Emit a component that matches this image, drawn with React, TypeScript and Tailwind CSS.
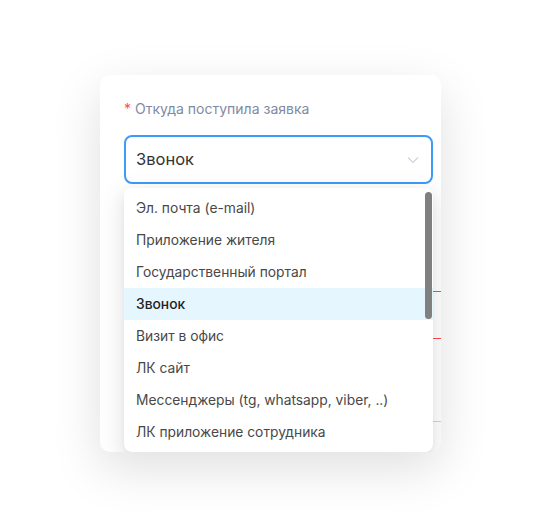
import React from "react";

const items = [
  "Эл. почта (e-mail)",
  "Приложение жителя",
  "Государственный портал",
  "Звонок",
  "Визит в офис",
  "ЛК сайт",
  "Мессенджеры (tg, whatsapp, viber, ..)",
  "ЛК приложение сотрудника",
];

export default function App() {
  return (
    <div
      className="w-[541px] h-[527px] bg-white overflow-hidden pt-[75px] pl-[100px]"
      style={{ fontFamily: "Inter, 'Noto Sans', sans-serif" }}
    >
      <div className="relative w-[341px] h-[377px] bg-white rounded-[10px] shadow-[0_16px_50px_rgba(0,0,0,0.13)] overflow-hidden">
        <div className="pt-[24px] pl-[24px] flex flex-col">
          <div className="flex items-center h-[18px] text-[14px] text-[#7f8aa3]">
            <span className="text-[#ff4d4f] mr-[4px]">*</span>
            <span>Откуда поступила заявка</span>
          </div>
          <div className="mt-[18px] h-[49px] w-[309px] rounded-[8px] border-2 border-[#3d9bf9] flex items-center justify-between pl-[10px] pr-[12px]">
            <span className="text-[16.5px] text-[#333]">Звонок</span>
            <svg width="12" height="8" viewBox="0 0 12 8" fill="none">
              <path d="M1 1.5 L6 6.5 L11 1.5" stroke="#d0d0e2" strokeWidth="1.2" />
            </svg>
          </div>
          {/* underlying form content, hidden by the dropdown */}
          <div className="h-[108px] border-b border-[#ff4d4f]" />
          <div className="h-[47px] border-b border-[#ff4d4f]" />
          <div className="h-[83px] border-b border-[#cdd3e3]" />
        </div>

        {/* dropdown */}
        <div className="absolute left-[24px] top-[113px] w-[309px] h-[264px] bg-white rounded-[8px] shadow-[0_6px_16px_rgba(0,0,0,0.08),0_3px_6px_-4px_rgba(0,0,0,0.12),0_9px_28px_8px_rgba(0,0,0,0.05)] py-[4px] flex flex-col">
          {items.map((it) => (
            <div
              key={it}
              className={
                "h-[32px] shrink-0 flex items-center pl-[12px] text-[13.8px] " +
                (it === "Звонок"
                  ? "bg-[#e6f6fe] text-[#222] font-medium"
                  : "text-[#484848]")
              }
            >
              {it}
            </div>
          ))}
          <div className="absolute right-[1px] top-[4px] w-[7px] h-[127px] rounded-full bg-[#808080]" />
        </div>
      </div>
    </div>
  );
}
